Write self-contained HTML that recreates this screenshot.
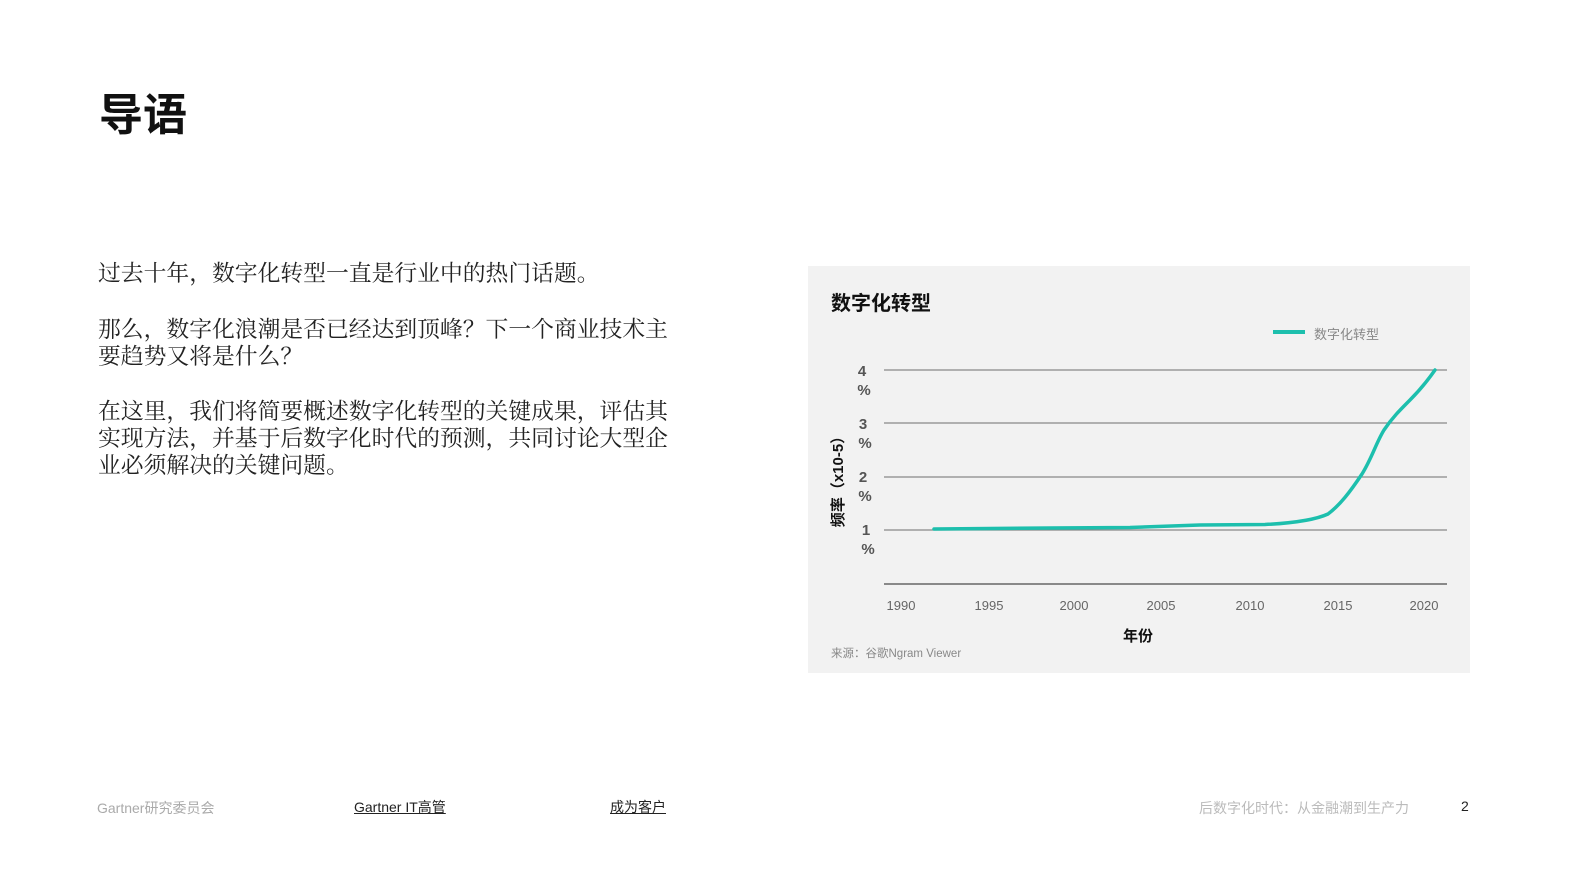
<!DOCTYPE html>
<html><head><meta charset="utf-8"><style>
*{margin:0;padding:0;box-sizing:border-box}
body{width:1587px;height:892px;background:#fff;position:relative;overflow:hidden;font-family:"Liberation Sans","Noto Sans CJK SC",sans-serif}
.abs{position:absolute;white-space:nowrap}
h1{position:absolute;left:99px;top:88px;font-size:44px;font-weight:700;color:#111;font-family:"Liberation Sans","Noto Sans CJK SC",sans-serif;line-height:56px}
.p{position:absolute;left:98px;width:580px;font-family:"Liberation Serif","Noto Serif CJK SC",serif;font-size:22.8px;line-height:27px;color:#222;white-space:normal}
.ft{font-size:14px;color:#aaa}
.lk{font-size:14px;color:#222;text-decoration:underline}
</style></head><body>
<h1>导语</h1>
<div class="p" style="top:260px">过去十年，数字化转型一直是行业中的热门话题。</div>
<div class="p" style="top:316px">那么，数字化浪潮是否已经达到顶峰？下一个商业技术主要趋势又将是什么？</div>
<div class="p" style="top:398px">在这里，我们将简要概述数字化转型的关键成果，评估其实现方法，并基于后数字化时代的预测，共同讨论大型企业必须解决的关键问题。</div>

<div class="abs" style="left:808px;top:266px;width:662px;height:407px;background:#f2f2f2"></div>
<svg class="abs" style="left:0;top:0" width="1587" height="892">
<g stroke="#888" stroke-width="1.2">
<line x1="884" y1="370" x2="1447" y2="370"/>
<line x1="884" y1="423" x2="1447" y2="423"/>
<line x1="884" y1="477" x2="1447" y2="477"/>
<line x1="884" y1="530" x2="1447" y2="530"/>
<line x1="884" y1="584" x2="1447" y2="584" stroke="#666" stroke-width="1.6"/>
</g>
<line x1="1273" y1="332" x2="1305" y2="332" stroke="#1dbfad" stroke-width="4"/>
<path d="M934 529 L1050 528 L1130 527.5 L1200 525 L1265 524.5 C1295 523 1315 520 1328 514 C1340 505 1350 492 1362 474 C1372 458 1376 443 1384 430 C1392 418 1400 410 1410 400 C1420 390 1428 380 1435 370" fill="none" stroke="#1dbfad" stroke-width="3.5" stroke-linecap="round"/>
<g font-family="Liberation Sans,Noto Sans CJK SC,sans-serif" font-size="13" fill="#666" text-anchor="middle">
<text x="901" y="610">1990</text><text x="989" y="610">1995</text><text x="1074" y="610">2000</text><text x="1161" y="610">2005</text><text x="1250" y="610">2010</text><text x="1338" y="610">2015</text><text x="1424" y="610">2020</text>
</g>
<g font-family="Liberation Sans,sans-serif" font-size="15" font-weight="700" fill="#555" text-anchor="middle">
<text x="862" y="376">4</text><text x="864" y="395">%</text>
<text x="863" y="429">3</text><text x="865" y="448">%</text>
<text x="863" y="482">2</text><text x="865" y="501">%</text>
<text x="866" y="535">1</text><text x="868" y="554">%</text>
</g>
<text transform="translate(843,478) rotate(-90)" text-anchor="middle" font-family="Liberation Sans,Noto Sans CJK SC,sans-serif" font-size="15" font-weight="700" fill="#111">频率（x10-5）</text>
</svg>
<div class="abs" style="left:831px;top:287px;font-size:20px;font-weight:700;color:#111">数字化转型</div>
<div class="abs" style="left:1314px;top:324px;font-size:13px;color:#888">数字化转型</div>
<div class="abs" style="left:1123px;top:625px;font-size:15px;font-weight:700;color:#111">年份</div>
<div class="abs" style="left:831px;top:645px;font-size:11.5px;color:#888">来源：谷歌Ngram Viewer</div>

<div class="abs ft" style="left:97px;top:798px">Gartner研究委员会</div>
<div class="abs lk" style="left:354px;top:797px">Gartner IT高管</div>
<div class="abs lk" style="left:610px;top:797px">成为客户</div>
<div class="abs ft" style="left:1199px;top:798px;color:#bbb">后数字化时代：从金融潮到生产力</div>
<div class="abs" style="left:1461px;top:798px;font-size:14px;color:#222">2</div>
</body></html>
